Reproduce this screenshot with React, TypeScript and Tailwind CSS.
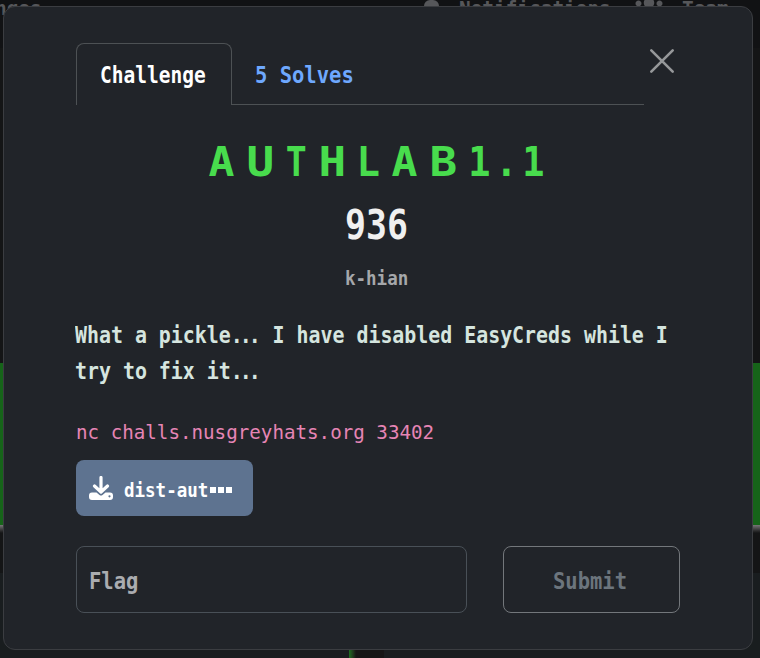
import type { ReactNode } from "react";
import { FaUsers } from "react-icons/fa";

const title = [
  { ch: "A", box: "w-6", glyph: "scale-x-[1.05]" },
  { ch: "U", box: "w-6", glyph: "scale-x-[1.12]" },
  { ch: "T", box: "w-[18px]", glyph: "scale-x-[.85]" },
  { ch: "H", box: "w-6", glyph: "scale-x-[1.12]" },
  { ch: "L", box: "w-[18px]", glyph: "scale-x-[.95]" },
  { ch: "A", box: "w-6", glyph: "scale-x-[1.05]" },
  { ch: "B", box: "w-6", glyph: "scale-x-[1.12]" },
  { ch: "1", box: "w-[18px]", glyph: "scale-x-[.9]" },
  { ch: ".", box: "w-1.5", glyph: "scale-x-[.9]" },
  { ch: "1", box: "w-[18px]", glyph: "scale-x-[.9]" },
];

function Tall({ children, className = "scale-y-[1.17]" }: { children: ReactNode; className?: string }) {
  return (
    <span className={"inline-block origin-left whitespace-pre font-bold " + className}>
      {children}
    </span>
  );
}

function Backdrop() {
  return (
    <div className="absolute inset-0 flex flex-col bg-[#141516] text-[#56575a]">
      <div className="h-12 shrink-0 bg-[#111214]">
        <div className="flex h-4 items-start text-[19.4px] leading-4 font-bold">
          <span className="w-[424px] -translate-x-[5px] translate-y-px">nges</span>
          <span className="h-4 w-[15px] rounded-t-md bg-[#56575a]" />
          <span className="ml-[20px] w-[177px] translate-y-px">Notifications</span>
          <FaUsers className="mt-[-7px] ml-[-2px] size-[30px]" />
          <span className="ml-[18px] translate-y-px">Team</span>
        </div>
      </div>
      <div className="h-[315px] shrink-0" />
      <div className="h-[162px] shrink-0 bg-[#166419]" />
      <div className="h-2 shrink-0 bg-linear-to-b from-[#777] to-[#141516]" />
      <div className="h-10 shrink-0" />
      <div className="flex grow items-end bg-[#191d1f]">
        <div className="ml-[349px] h-2 w-[35px] bg-linear-to-r from-[#1c701f] to-[#161616] to-20%" />
      </div>
    </div>
  );
}

export default function App() {
  return (
    <div className="relative h-[658px] w-[760px] overflow-hidden font-['DejaVu_Sans_Mono',monospace]">
      <Backdrop />
      <main className="relative mt-[6px] ml-[3px] flex h-[644px] w-[750px] flex-col rounded-xl border border-[#3b3d41] bg-[#212429] px-[72px] pt-9">
        <header className="flex h-[62px] items-start text-[19.5px]">
          <button className="h-[62px] w-[156px] shrink-0 rounded-t-lg border border-b-0 border-[#4d5154] pl-[23px] text-left leading-[63px] text-white">
            <Tall>Challenge</Tall>
          </button>
          <button className="h-[62px] w-[412px] border-b border-[#4d5154] pl-[23px] text-left text-[20.5px] leading-[65px] text-[#6ea8fe]">
            <Tall className="scale-y-[1.12]">5 Solves</Tall>
          </button>
          <svg className="mt-[6px] ml-[6px] size-6 shrink-0 overflow-visible" viewBox="0 0 24 24" fill="none" stroke="#96989a" strokeWidth="2.6" strokeLinecap="round">
            <path d="M1.3 1.3l21.4 21.4M22.7 1.3L1.3 22.7" />
          </svg>
        </header>

        <h1 className="mt-[42px] ml-[133px] flex h-[30px] gap-[15px] text-[41px] leading-[30px] font-bold text-[#48dc4d]">
          {title.map((item, i) => (
            <span key={i} className={"flex justify-center " + item.box}>
              <span className={item.glyph}>{item.ch}</span>
            </span>
          ))}
        </h1>
        <h2 className="mt-[33px] ml-[269px] h-[30px] text-[41px] leading-[30px] font-bold text-[#f0f0f0]">
          <span className="inline-block origin-left scale-x-[.85]">936</span>
        </h2>
        <div className="mt-7 ml-[269px] h-5 text-[17.5px] leading-5 text-[#a5a7aa]">
          <Tall className="scale-y-[1.12]">k-hian</Tall>
        </div>

        <p className="mt-[30px] -mr-2 -ml-px text-[19.9px] leading-9 text-[#d5e5df]">
          <Tall>
            What a pickle<span className="tracking-[-3px]">...</span>
            <span className="ml-[3px]"> I have disabled EasyCreds while I</span>
          </Tall>
          <br />
          <Tall>
            try to fix it<span className="tracking-[-3px]">...</span>
          </Tall>
        </p>
        <code className="mt-[31px] h-6 font-['DejaVu_Sans_Mono',monospace] text-[19.2px] leading-6 whitespace-pre text-[#e685b5]">
          nc challs.nusgreyhats.org 33402
        </code>
        <a className="mt-[15px] flex h-14 w-[177px] items-center rounded-lg bg-[#5e7390] pl-[13px] text-white">
          <svg className="size-6" viewBox="0 0 24 24">
            <path d="M12 1.5v14M5.5 10l6.5 6 6.5-6" fill="none" stroke="white" strokeWidth="3.2" strokeLinecap="round" strokeLinejoin="round" />
            <path fill="white" fillRule="evenodd" d="M3 16.5h4.5l3 2.5q1.5 1 3 0l3-2.5H21a3 3 0 0 1 3 3v1.500a3 3 0 0 1-3 3H3a3 3 0 0 1-3-3v-1.500a3 3 0 0 1 3-3zM20.500 19.200a1.100 1.100 0 1 0 0 2.200a1.100 1.100 0 0 0 0-2.200z" />
          </svg>
          <span className="ml-[11px] flex items-center pt-[3px] text-[17.5px] leading-6">
            <Tall className="scale-y-[1.12]">dist-aut</Tall>
            <span className="ml-[2px] flex gap-[2px]">
              <i className="size-[6px] bg-white" />
              <i className="size-[6px] bg-white" />
              <i className="size-[6px] bg-white" />
            </span>
          </span>
        </a>

        <form className="mt-[30px] flex gap-9 text-[20.5px]">
          <div className="h-[67px] w-[391px] rounded-lg border border-[#495057] pl-[12px] leading-[69px] text-[#aaacb0]">
            <Tall className="scale-y-[1.12]">Flag</Tall>
          </div>
          <button type="button" className="h-[67px] w-[177px] rounded-lg border border-[#73777b] pl-[49px] text-left leading-[69px] text-[#6c757d]">
            <Tall className="scale-y-[1.12]">Submit</Tall>
          </button>
        </form>
      </main>
    </div>
  );
}
